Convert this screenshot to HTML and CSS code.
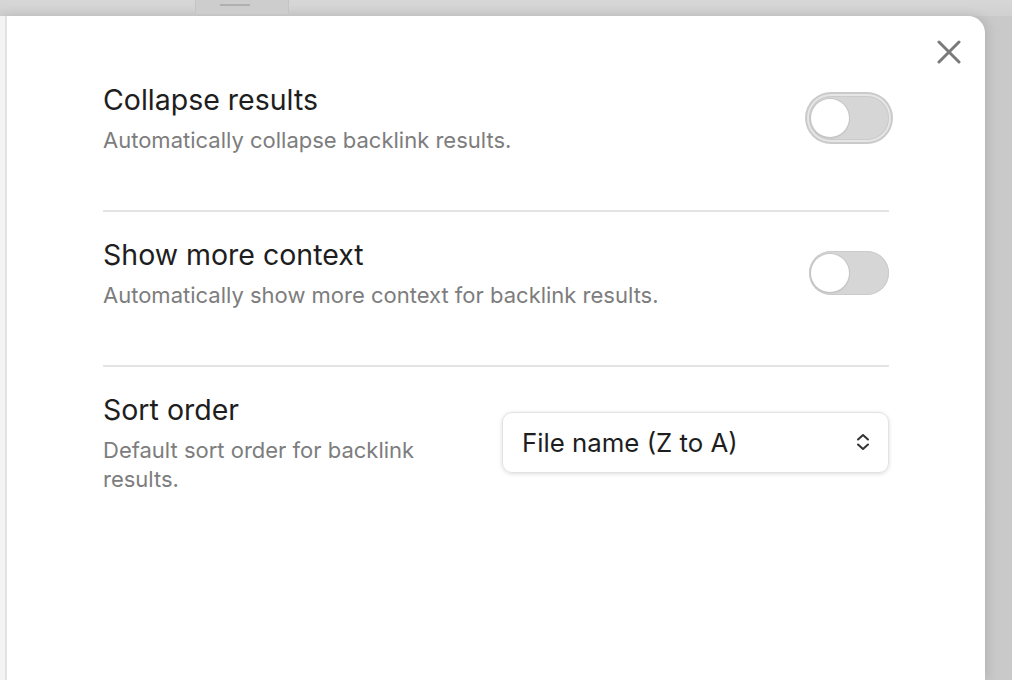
FILE: index.html
```html
<!DOCTYPE html>
<html>
<head>
<meta charset="utf-8">
<link rel="stylesheet" href="styles.css">
</head>
<body>
<div class="topbar">
  <div class="tab"><span class="tab-glyph"></span></div>
</div>
<div class="stage">
  <div class="modal">
    <div class="sidebar"></div>
    <div class="content">
      <button class="close" aria-label="Close">
        <svg width="24" height="24" viewBox="0 0 24 24"><path d="M2 2 L22 22 M22 2 L2 22" stroke="#7a7a7a" stroke-width="3" stroke-linecap="round" fill="none"/></svg>
      </button>
      <div class="setting">
        <div class="info">
          <div class="name">Collapse results</div>
          <div class="desc">Automatically collapse backlink results.</div>
        </div>
        <div class="control">
          <div class="toggle focused"><div class="knob"></div></div>
        </div>
      </div>
      <div class="setting">
        <div class="info">
          <div class="name">Show more context</div>
          <div class="desc">Automatically show more context for backlink results.</div>
        </div>
        <div class="control">
          <div class="toggle"><div class="knob"></div></div>
        </div>
      </div>
      <div class="setting">
        <div class="info">
          <div class="name">Sort order</div>
          <div class="desc">Default sort order for backlink results.</div>
        </div>
        <div class="control">
          <div class="select">
            <span>File name (Z to A)</span>
            <svg width="16" height="20" viewBox="0 0 16 20"><path d="M3 7.5 L8 3 L13 7.5 M3 12.5 L8 17 L13 12.5" stroke="#333" stroke-width="2" fill="none" stroke-linecap="round" stroke-linejoin="round"/></svg>
          </div>
        </div>
      </div>
    </div>
  </div>
</div>
</body>
</html>
```

FILE: styles.css
```css
html, body {
  margin: 0;
  padding: 0;
  height: 100%;
  overflow: hidden;
}
body {
  background: linear-gradient(to right, #cfcfcf, #c9c9c9);
  font-family: Inter, "Noto Sans", sans-serif;
}
.topbar {
  height: 16px;
  background: linear-gradient(to bottom, #d7d7d7, #d0d0d0);
  display: flex;
}
.tab {
  margin-left: 195px;
  width: 92px;
  height: 14px;
  border-left: 1px solid #c4c4c4;
  border-right: 1px solid #c4c4c4;
  background: #cdcdcd;
  position: relative;
}
.tab-glyph {
  position: absolute;
  left: 24px;
  top: 0;
  width: 30px;
  height: 4px;
  border-bottom: 2px solid #b0b0b0;
}
.stage {
  display: flex;
  height: 664px;
}
.modal {
  width: 985px;
  height: 664px;
  background: #fff;
  border-radius: 0 17px 0 0;
  display: flex;
  box-shadow: 2px 0 12px rgba(0,0,0,0.12);
}
.sidebar {
  width: 5px;
  background: #f3f3f3;
  border-right: 2px solid #e2e2e2;
}
.content {
  flex: 1;
  padding: 41px 96px 0;
  position: relative;
}
.close {
  position: absolute;
  top: 24px;
  right: 24px;
  width: 24px;
  height: 24px;
  padding: 0;
  border: none;
  background: none;
  display: flex;
}
.setting {
  display: flex;
  align-items: center;
  padding: 23px 0 55px;
  gap: 24px;
}
.setting + .setting {
  border-top: 2px solid #e3e3e3;
}
.info {
  flex: 1;
}
.name {
  font-size: 28.5px;
  line-height: 40px;
  color: #1e1e1e;
}
.desc {
  margin-top: 6px;
  font-size: 22px;
  line-height: 29px;
  color: #7d7d7d;
}
.control {
  display: flex;
  align-items: center;
}
.toggle {
  width: 80px;
  height: 44px;
  border-radius: 22px;
  background: #d6d6d6;
  box-shadow: inset 0 0 0 1px #cbcbcb;
  position: relative;
}
.toggle.focused {
  box-shadow: inset 0 0 0 1px #cbcbcb, 0 0 0 2px #e6e6e6, 0 0 0 4px #cacaca;
}
.knob {
  position: absolute;
  left: 2px;
  top: 3px;
  width: 38px;
  height: 38px;
  border-radius: 50%;
  background: #fff;
  box-shadow: 0 0 0 1px #c6c6c6, 0 1px 2px rgba(0,0,0,0.15);
}
.select {
  width: 387px;
  height: 61px;
  box-sizing: border-box;
  border: 1px solid #e2e2e2;
  border-radius: 10px;
  box-shadow: 0 1px 4px rgba(0,0,0,0.14);
  display: flex;
  align-items: center;
  justify-content: space-between;
  padding: 0 17px 0 19px;
  font-size: 25.8px;
  color: #1e1e1e;
}
```
